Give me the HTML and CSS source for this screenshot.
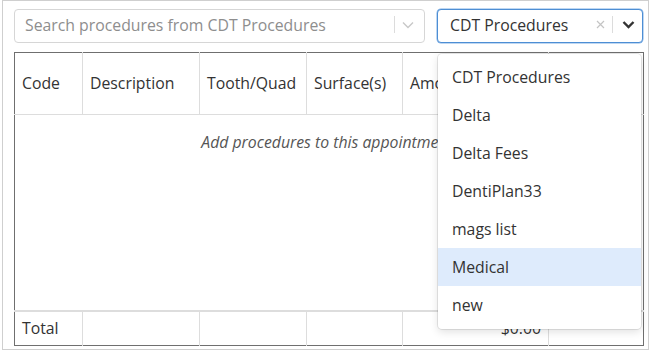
FILE: index.html
```html
<!DOCTYPE html>
<html>
<head>
<meta charset="utf-8">
<link rel="stylesheet" href="styles.css">
</head>
<body>
<div class="frame">
  <div class="toolbar">
    <div class="search">
      <span class="placeholder">Search procedures from CDT Procedures</span>
      <span class="indicators">
        <span class="sep"></span>
        <svg class="chev light" width="12" height="8" viewBox="0 0 12 8"><polyline points="1,1.5 6,6.5 11,1.5" fill="none" stroke="#c8c8c8" stroke-width="1.4"/></svg>
      </span>
    </div>
    <div class="select">
      <span class="value">CDT Procedures</span>
      <span class="indicators">
        <svg class="clear" width="9" height="9" viewBox="0 0 9 9"><path d="M1 1L8 8M8 1L1 8" stroke="#c4c4c4" stroke-width="1.2" fill="none"/></svg>
        <span class="sep"></span>
        <svg class="chev dark" width="13" height="9" viewBox="0 0 13 9"><polyline points="1.5,2 6.5,7 11.5,2" fill="none" stroke="#333" stroke-width="2.4"/></svg>
      </span>
      <div class="menu">
        <div class="opt">CDT Procedures</div>
        <div class="opt">Delta</div>
        <div class="opt">Delta Fees</div>
        <div class="opt">DentiPlan33</div>
        <div class="opt">mags list</div>
        <div class="opt focused">Medical</div>
        <div class="opt">new</div>
      </div>
    </div>
  </div>
  <table class="proc">
    <colgroup>
      <col class="c-code"><col class="c-desc"><col class="c-tooth"><col class="c-surf"><col class="c-amt"><col class="c-act">
    </colgroup>
    <thead>
      <tr class="head">
        <th>Code</th><th>Description</th><th>Tooth/Quad</th><th>Surface(s)</th><th>Amount</th><th></th>
      </tr>
    </thead>
    <tbody>
      <tr class="empty"><td colspan="6">Add procedures to this appointment.</td></tr>
      <tr class="filler"><td colspan="6"></td></tr>
    </tbody>
    <tfoot>
      <tr class="total">
        <td>Total</td><td></td><td></td><td></td><td class="amt">$0.00</td><td></td>
      </tr>
    </tfoot>
  </table>
</div>
</body>
</html>
```
FILE: styles.css
```css
html, body {
  margin: 0;
  padding: 0;
  background: #fff;
}
body {
  font-family: "Open Sans", "Liberation Sans", sans-serif;
  font-size: 15.8px;
  color: #333;
}
.frame {
  margin-left: 2px;
  width: 647px;
  height: 350px;
  box-sizing: border-box;
  border: 1px solid #cfcfcf;
  padding: 8px 5px 0 11px;
}
.toolbar {
  display: flex;
  gap: 12px;
  height: 34px;
}
.search, .select {
  box-sizing: border-box;
  height: 34px;
  border-radius: 4px;
  display: flex;
  align-items: center;
  justify-content: space-between;
  background: #fff;
  padding-bottom: 3px;
}
.search {
  width: 411px;
  border: 1px solid #d6d6d6;
  padding-left: 10px;
}
.select {
  width: 206px;
  border: 1px solid #4d8ed4;
  box-shadow: 0 0 0 0.5px #7fb0e6;
  padding-left: 12px;
  position: relative;
}
.placeholder {
  color: #8e8e8e;
}
.value {
  color: #333;
}
.indicators {
  display: flex;
  align-items: center;
  height: 100%;
}
.sep {
  width: 1px;
  height: 17px;
  background: #dcdcdc;
}
.search .sep {
  margin-right: 7px;
}
.search .chev {
  margin-right: 10px;
}
.clear {
  margin-right: 7px;
}
.select .sep {
  margin-right: 9px;
}
.select .chev {
  margin-right: 7px;
}
.menu {
  position: absolute;
  top: 44px;
  left: 0;
  right: 1px;
  background: #fff;
  border-radius: 4px;
  box-shadow: 0 0 0 1px rgba(0,0,0,0.09), 0 3px 8px rgba(0,0,0,0.12);
  padding: 4px 0 5px;
  z-index: 5;
}
.opt {
  height: 38px;
  line-height: 38px;
  padding: 0 14px;
  color: #333;
}
.opt.focused {
  background: #deebfc;
}
.proc {
  margin-top: 9px;
  width: 629px;
  height: 294px;
  border-collapse: collapse;
  table-layout: fixed;
  border: 1px solid #6f6f6f;
}
.c-code { width: 68px; }
.c-desc { width: 117px; }
.c-tooth { width: 107px; }
.c-surf { width: 96px; }
.c-amt { width: 146px; }
.c-act { width: 95px; }
.head th {
  height: 59px;
  padding: 0 7px 2px;
  text-align: left;
  font-weight: normal;
  color: #333;
  white-space: nowrap;
  overflow: hidden;
  border-left: 1px solid #ddd;
  border-bottom: 1px solid #ddd;
}
.head th:first-child {
  border-left: none;
}
.empty td {
  height: 53px;
  text-align: center;
  font-style: italic;
  color: #555;
  padding: 0;
}
.filler td {
  height: auto;
  padding: 0;
}
.total td {
  height: 32px;
  padding: 0 7px 1px;
  border-top: 2px solid #ddd;
  border-left: 1px solid #ddd;
  color: #333;
}
.total td:first-child {
  border-left: none;
}
.total td.amt {
  text-align: right;
}
```
